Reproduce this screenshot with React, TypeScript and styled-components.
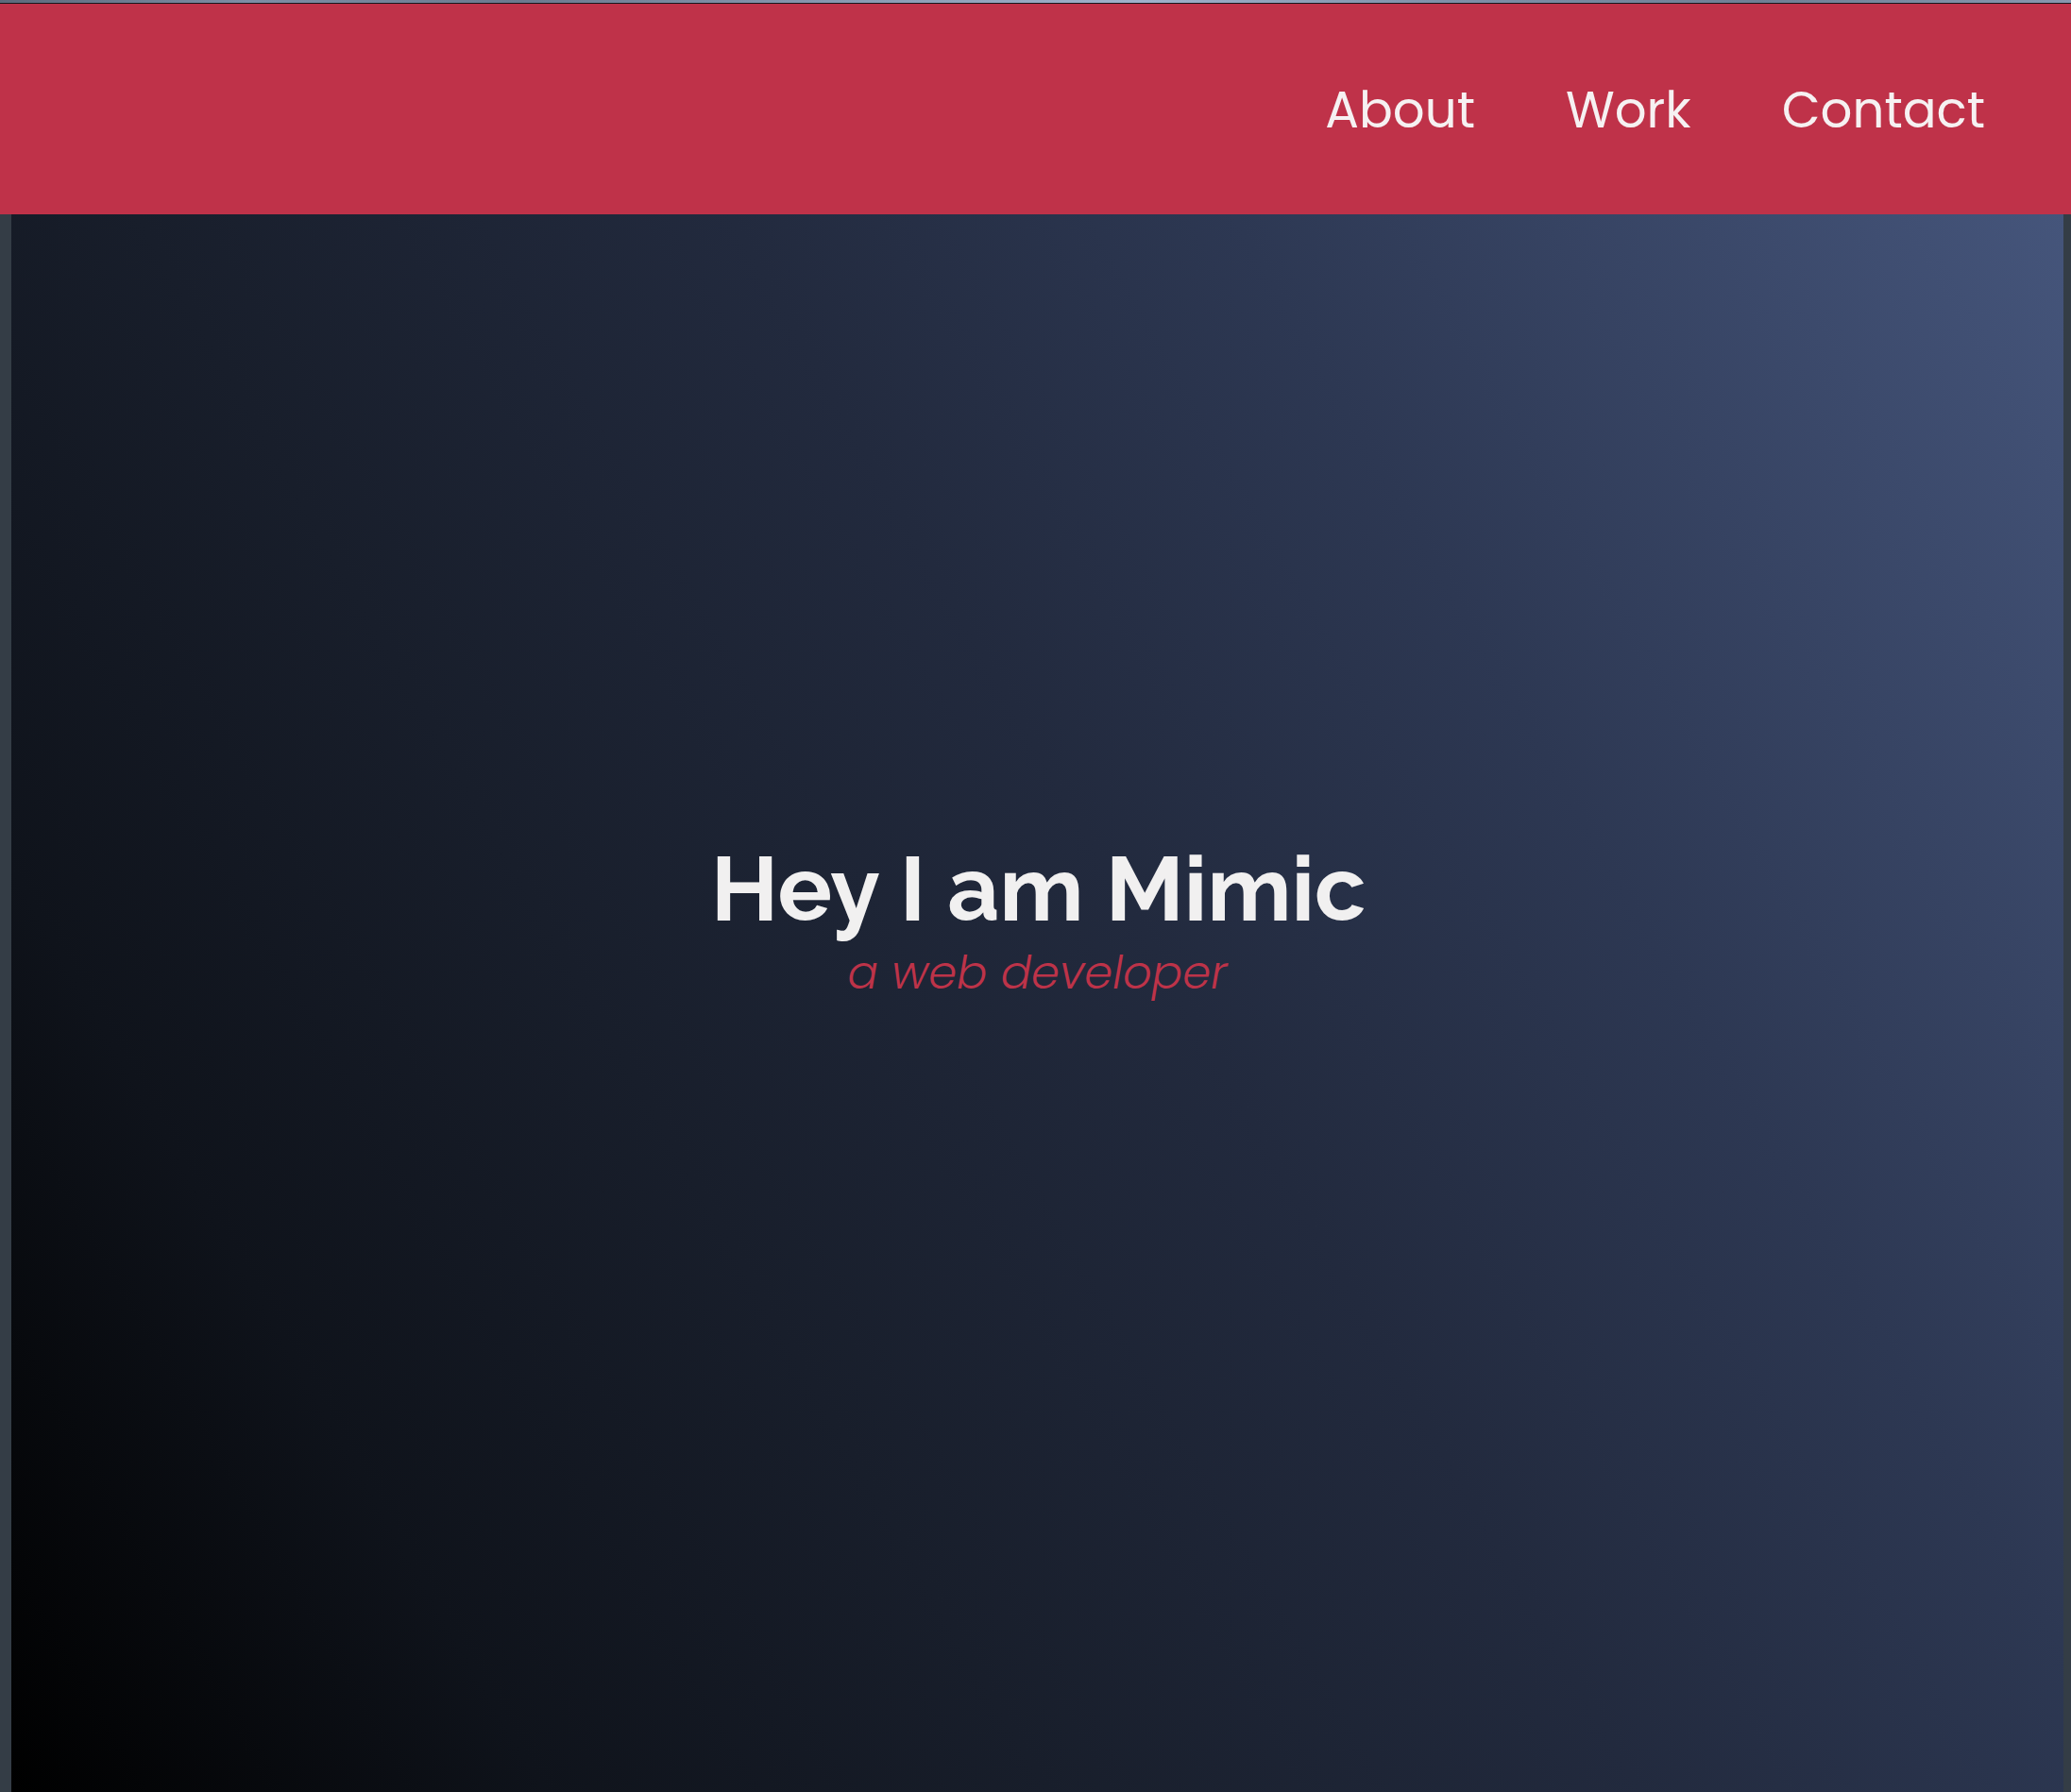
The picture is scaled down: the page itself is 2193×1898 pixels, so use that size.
import React from "react";
import styled, { createGlobalStyle } from "styled-components";

const GlobalStyle = createGlobalStyle`
  html, body {
    margin: 0;
    padding: 0;
    height: 100%;
    overflow: hidden;
    background: #343d46;
  }
  * { box-sizing: border-box; }
`;

const Page = styled.div`
  display: flex;
  flex-direction: column;
  height: 100vh;
  background: #343d46;
`;

const TopStrip = styled.div`
  height: 4px;
  flex: none;
  border-bottom: 1px solid #15181d;
  background: linear-gradient(
    90deg,
    #5c6a7c 0%,
    #7d8ea6 12%,
    #6b7a8f 25%,
    #8a9cb5 42%,
    #9fb2cc 55%,
    #7e90a9 70%,
    #6f7f95 85%,
    #8798b0 100%
  );
`;

const NavBar = styled.nav`
  flex: none;
  height: 223px;
  background: #bf3249;
  display: flex;
  align-items: center;
  justify-content: flex-end;
  padding-right: 43px;
  padding-top: 2px;
`;

const NavLink = styled.a`
  font-family: Poppins, Lato, "Noto Sans", sans-serif;
  font-weight: 400;
  font-size: 53px;
  line-height: 1;
  color: #f6f1f2;
  text-decoration: none;
  padding: 0 48px;
`;

const HeroFrame = styled.div`
  flex: 1;
  display: flex;
  padding: 0 8px 0 12px;
  min-height: 0;
`;

const Hero = styled.section`
  flex: 1;
  display: flex;
  flex-direction: column;
  align-items: center;
  padding-top: 666px;
  background: linear-gradient(
    60deg,
    #000000 0%,
    #0f131b 18%,
    #181e2b 35%,
    #222a3e 55%,
    #2d3853 72%,
    #45557b 100%
  );
`;

const Title = styled.h1`
  margin: 0;
  font-family: Raleway, Lato, "Noto Sans", sans-serif;
  font-weight: 700;
  font-size: 96px;
  line-height: 1;
  color: #f1f0f0;
  padding-left: 2px;
`;

const Subtitle = styled.p`
  margin: 18px 0 0;
  font-family: Poppins, Lato, "Noto Sans", sans-serif;
  font-weight: 300;
  font-style: italic;
  font-size: 48px;
  line-height: 1;
  color: #bd3349;
`;

export default function App() {
  return (
    <>
      <GlobalStyle />
      <Page>
        <TopStrip />
        <NavBar>
          <NavLink href="#about">About</NavLink>
          <NavLink href="#work">Work</NavLink>
          <NavLink href="#contact">Contact</NavLink>
        </NavBar>
        <HeroFrame>
          <Hero>
            <Title>Hey I am Mimic</Title>
            <Subtitle>a web developer</Subtitle>
          </Hero>
        </HeroFrame>
      </Page>
    </>
  );
}
